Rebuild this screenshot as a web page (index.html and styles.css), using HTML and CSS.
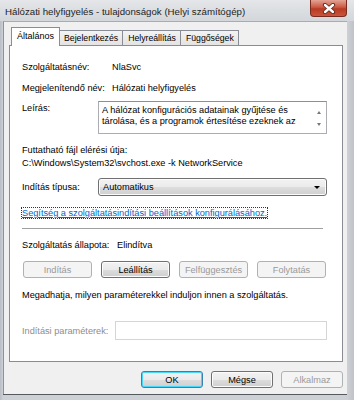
FILE: index.html
```html
<!DOCTYPE html>
<html lang="hu">

<head>
    <meta charset="UTF-8">
    <meta name="viewport" content="width=device-width, initial-scale=1.0">
    <title>Hálózati helyfigyelés - tulajdonságok (Helyi számítógép)</title>
    <link rel="stylesheet" href="styles.css">
</head>

<body>

<div class="window">
    <div class="titlebar">
        <span class="title">Hálózati helyfigyelés - tulajdonságok (Helyi számítógép)</span>
        <button type="button" class="close" aria-label="Bezárás">
            <svg width="14" height="11" viewBox="0 0 14 11">
                <path d="M3 2 L11 9 M11 2 L3 9" stroke="#5a2a22" stroke-width="4.2" stroke-linecap="round"/>
                <path d="M3 2 L11 9 M11 2 L3 9" stroke="#ffffff" stroke-width="2.4" stroke-linecap="round"/>
            </svg>
        </button>
    </div>

    <div class="client">
        <div class="tabs">
            <div class="tab active">Általános</div>
            <div class="tab">Bejelentkezés</div>
            <div class="tab">Helyreállítás</div>
            <div class="tab">Függőségek</div>
        </div>

        <div class="panel">
            <div class="row info">
                <span class="label wide">Szolgáltatásnév:</span>
                <span>NlaSvc</span>
            </div>
            <div class="row info second">
                <span class="label wide">Megjelenítendő név:</span>
                <span>Hálózati helyfigyelés</span>
            </div>
            <div class="row desc">
                <span class="label narrow">Leírás:</span>
                <div class="textbox">
                    <div class="textbox-text">A hálózat konfigurációs adatainak gyűjtése és tárolása, és a programok értesítése ezeknek az</div>
                    <div class="scroller">
                        <span class="arrow up"></span>
                        <span class="arrow down"></span>
                    </div>
                </div>
            </div>
            <div class="path-label">Futtatható fájl elérési útja:</div>
            <div class="path">C:\Windows\System32\svchost.exe -k NetworkService</div>
            <div class="row start">
                <span class="label narrow">Indítás típusa:</span>
                <div class="combo">
                    <span>Automatikus</span>
                    <span class="combo-arrow"></span>
                </div>
            </div>
            <div class="help">
                <a href="#" class="link">Segítség a szolgáltatásindítási beállítások konfigurálásához.</a>
            </div>
            <hr class="sep"/>
            <div class="row status">
                <span class="label status-label">Szolgáltatás állapota:</span>
                <span>Elindítva</span>
            </div>
            <div class="service-buttons">
                <button type="button" class="btn" disabled>Indítás</button>
                <button type="button" class="btn">Leállítás</button>
                <button type="button" class="btn" disabled>Felfüggesztés</button>
                <button type="button" class="btn" disabled>Folytatás</button>
            </div>
            <div class="hint">Megadhatja, milyen paraméterekkel induljon innen a szolgáltatás.</div>
            <div class="row params">
                <span class="label params-label">Indítási paraméterek:</span>
                <div class="param-input"></div>
            </div>
        </div>

        <div class="actions">
            <button type="button" class="btn dlg default">OK</button>
            <button type="button" class="btn dlg">Mégse</button>
            <button type="button" class="btn dlg" disabled>Alkalmaz</button>
        </div>
    </div>
</div>

</body>

</html>
```

FILE: styles.css
```css
html, body {
    margin: 0;
    padding: 0;
}

body {
    width: 354px;
    height: 400px;
    overflow: hidden;
    font-family: "Liberation Sans", Arial, sans-serif;
    font-size: 9.2px;
    line-height: 12px;
    color: #000;
}

.window {
    width: 354px;
    height: 400px;
    display: flex;
    flex-direction: column;
    background: linear-gradient(to right, #b9bec4, #cdd1d6 3px, #cdd1d6 347px, #bfc3c8);
}

.titlebar {
    height: 21px;
    display: flex;
    align-items: flex-start;
    justify-content: space-between;
    background: linear-gradient(#e4e6e9, #d3d6da);
}

.title {
    padding: 5px 0 0 5px;
    font-size: 9.7px;
    line-height: 14px;
    color: #1e1e1e;
}

.close {
    width: 37px;
    height: 17px;
    margin-right: 7px;
    padding: 0;
    border: 1px solid #7a2b20;
    border-top: 0;
    border-radius: 0 0 4px 4px;
    background: linear-gradient(#e3a394, #cc5a43 45%, #b93a23 55%, #c9553c);
    display: flex;
    align-items: center;
    justify-content: center;
}

.client {
    flex: 1;
    margin: 0 7px 6px 3px;
    background: #f0f0f0;
    border-top: 1px solid #a7acb2;
    border-left: 1px solid #8e9297;
    display: flex;
    flex-direction: column;
    box-shadow: 0 1px 0 #555a60;
}

.tabs {
    display: flex;
    align-items: flex-end;
    height: 18px;
    margin-top: 5px;
    padding-left: 7px;
    position: relative;
    z-index: 1;
}

.tab {
    height: 14px;
    padding: 0 4px 0 5px;
    line-height: 14px;
    border: 1px solid #898c95;
    border-bottom: 0;
    margin-left: -1px;
    background: linear-gradient(#f3f3f3, #e3e3e3);
    font-size: 8.7px;
}

.tab.active {
    height: 18px;
    line-height: 17px;
    padding: 0 5px;
    margin: 0 -2px -1px 0;
    background: #fff;
    position: relative;
    font-size: 9px;
}

.tab.active + .tab {
    margin-left: 0;
}

.panel {
    flex: 1;
    margin: 0 4px 0 5px;
    border: 1px solid #898c95;
    background: #fff;
    padding: 15px 15px 0 12px;
    display: flex;
    flex-direction: column;
}

.row {
    display: flex;
    align-items: center;
}

.label {
    flex: none;
}

.label.wide {
    width: 90px;
}

.label.narrow {
    width: 76px;
}

.info.second {
    margin-top: 9px;
}

.desc {
    margin-top: 7px;
    align-items: flex-start;
}

.desc .label {
    padding-top: 1px;
}

.textbox {
    flex: 1;
    height: 31px;
    border: 1px solid #abadb3;
    border-top-color: #8e8f8f;
    display: flex;
}

.textbox-text {
    flex: 1;
    padding: 3px 0 0 3px;
    line-height: 11px;
    height: 22px;
    overflow: hidden;
}

.scroller {
    width: 14px;
    display: flex;
    flex-direction: column;
    align-items: center;
    justify-content: space-between;
    padding: 9px 0 7px;
}

.arrow {
    width: 0;
    height: 0;
    border-left: 2.5px solid transparent;
    border-right: 2.5px solid transparent;
}

.arrow.up {
    border-bottom: 3px solid #777;
}

.arrow.down {
    border-top: 3px solid #777;
}

.path-label {
    margin-top: 10px;
}

.path {
    margin-top: 1px;
}

.start {
    margin-top: 9px;
}

.combo {
    flex: 1;
    height: 16px;
    border: 1px solid #707070;
    border-radius: 3px;
    background: linear-gradient(#f2f2f2 0%, #ebebeb 50%, #dddddd 51%, #cfcfcf 100%);
    display: flex;
    align-items: center;
    justify-content: space-between;
    padding: 0 6px 0 4px;
    box-shadow: inset 0 0 0 1px #fcfcfc;
}

.combo-arrow {
    width: 0;
    height: 0;
    border-left: 3px solid transparent;
    border-right: 3px solid transparent;
    border-top: 3px solid #000;
}

.help {
    margin-top: 11px;
}

.link {
    color: #0066cc;
    text-decoration: underline;
    outline: 1px dotted #333;
    outline-offset: 0;
}

.sep {
    margin: 9px 4px 0 0;
    border: 0;
    border-top: 1px solid #a0a0a0;
    height: 0;
}

.status {
    margin-top: 10px;
}

.status-label {
    width: 95px;
}

.service-buttons {
    display: flex;
    gap: 9px;
    margin: 10px 0 0 1px;
}

.btn {
    width: 69px;
    height: 17px;
    padding: 0;
    font: inherit;
    color: #000;
    border: 1px solid #707070;
    border-radius: 3px;
    background: linear-gradient(#f2f2f2 0%, #ebebeb 50%, #dddddd 51%, #cfcfcf 100%);
    box-shadow: inset 0 0 0 1px #fcfcfc;
}

.btn:disabled {
    color: #9a9a9a;
    border-color: #adb2b5;
    background: #f4f4f4;
    box-shadow: none;
}

.hint {
    margin-top: 11px;
}

.params {
    margin-top: 20px;
}

.params-label {
    width: 93px;
    color: #8d8d8d;
}

.param-input {
    flex: 1;
    height: 17px;
    border: 1px solid #d5d5d5;
    background: #fff;
}

.actions {
    height: 32px;
    display: flex;
    justify-content: flex-end;
    align-items: flex-start;
    gap: 8px;
    padding: 9px 4px 0 0;
    box-sizing: border-box;
}

.btn.dlg {
    width: 62px;
}

.btn.default {
    border-color: #3c7fb1;
    box-shadow: inset 0 0 0 1px #48d7f9;
}
```
